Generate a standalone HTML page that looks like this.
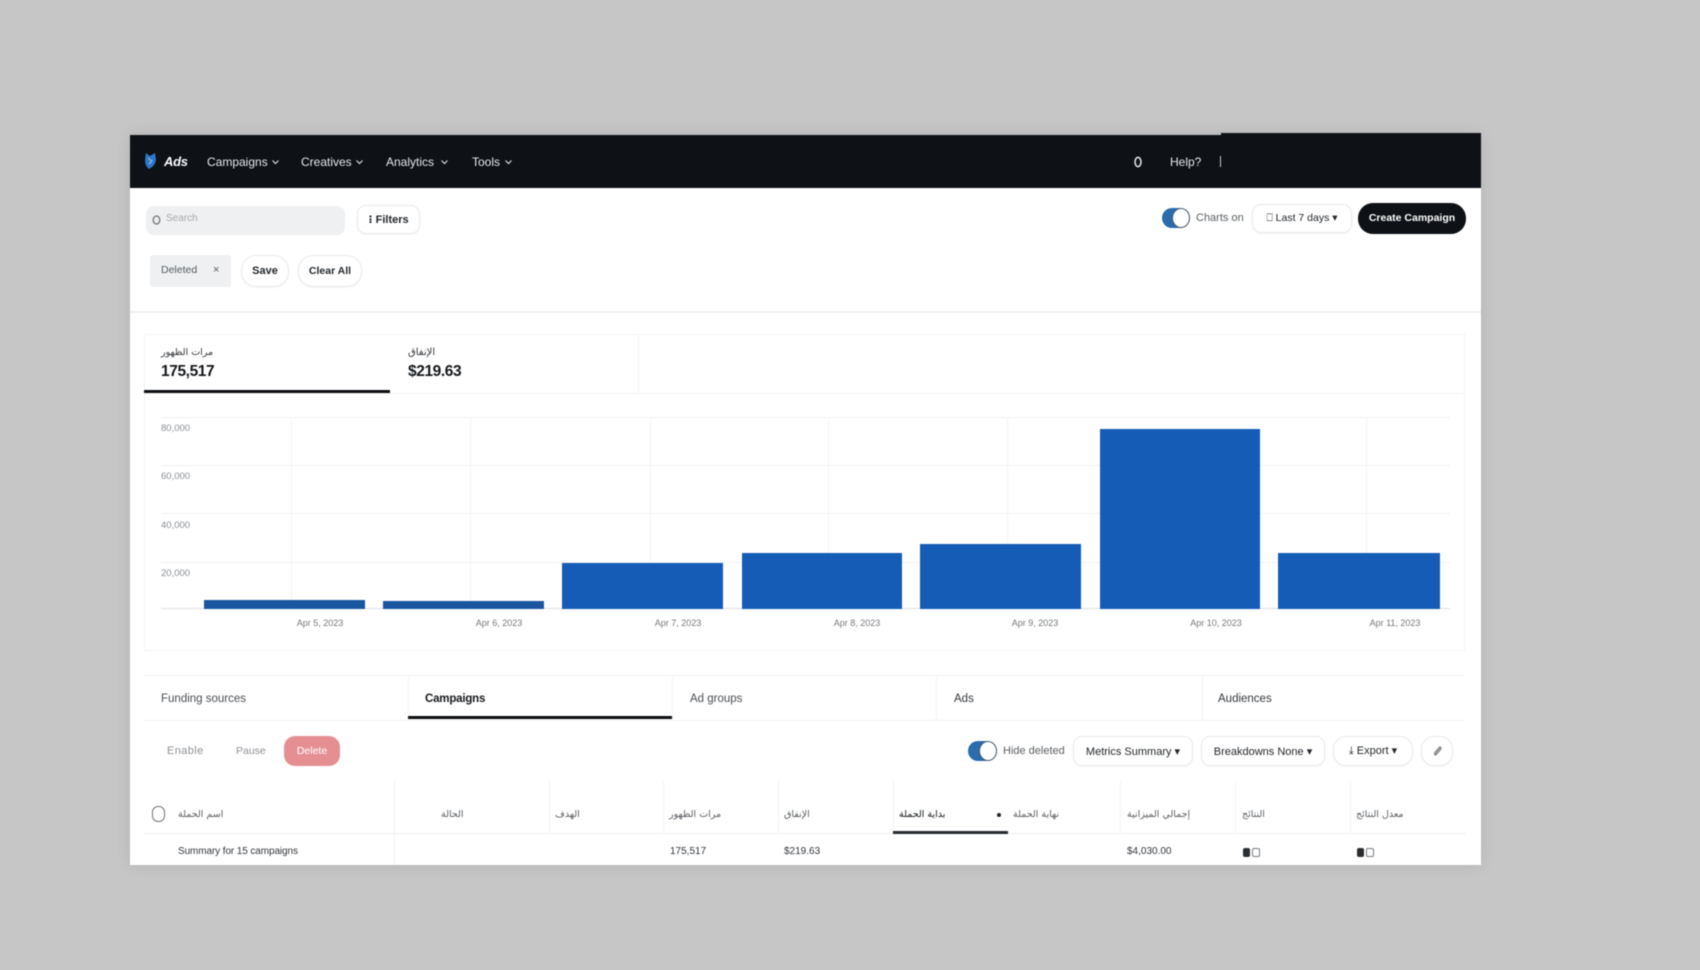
<!DOCTYPE html>
<html lang="en">
<head>
<meta charset="utf-8">
<title>Ads</title>
<style>
html,body{margin:0;padding:0;width:1700px;height:970px;overflow:hidden;background:#c6c6c6;font-family:"Liberation Sans","DejaVu Sans",sans-serif;color:#1a1d21}
.a{position:absolute;white-space:nowrap}
#page{position:absolute;left:130px;top:135px;width:1351px;height:730px;background:#fff;box-shadow:0 0 14px rgba(0,0,0,.1)}
#root{position:absolute;left:0;top:0;width:1700px;height:970px;filter:blur(.5px)}
.nav{color:#e6e8ea;font-size:12px;top:153px;line-height:18px}
.btn{border:1px solid #e8eaec;border-radius:9px;background:#fff;box-sizing:border-box;display:flex;align-items:center;justify-content:center;font-size:11px;color:#23272b;white-space:nowrap;box-shadow:0 1px 2px rgba(0,0,0,.04)}
.hl{height:1px;background:#f1f2f3}
.vl{width:1px;background:#f3f4f5}
.bar{background:#155cb6;top:auto}
.ylab{font-size:9.5px;color:#8a8d90;line-height:12px;left:161px}
.xlab{font-size:9px;color:#75787c;line-height:12px;top:617px;transform:translateX(-50%)}
.tab{font-size:11.5px;color:#4a4e52;line-height:16px;top:691px}
.th{font-family:"DejaVu Sans",sans-serif;font-size:9.5px;color:#5a5e62;line-height:14px;top:808px}
.td{font-size:10px;color:#33373b;line-height:14px;top:845px}
.tog{border-radius:11px;background:#2a6cae;box-sizing:border-box}
.tog i{position:absolute;right:0;top:0;bottom:0;border-radius:50%;background:#fff;border:1.5px solid #4a5a68;box-sizing:border-box}
</style>
</head>
<body>
<div id="root">
<div id="page"></div>

<!-- top nav -->
<div class="a" style="left:130px;top:135px;width:1351px;height:53px;background:#0e1116"></div>
<div class="a" style="left:1221px;top:133px;width:260px;height:3px;background:#0e1116"></div>
<svg class="a" style="left:143px;top:152px" width="15" height="18" viewBox="0 0 15 18"><path d="M3 1 L7 4 L12 1 L13 8 Q12 14 6 17 Q2 14 2 8 Z" fill="#2f77c8"/><path d="M5 6 L9 9 L6 12" stroke="#9cc7ef" stroke-width="1" fill="none"/></svg>
<div class="a" style="left:164px;top:152px;color:#fff;font-size:13px;font-weight:bold;font-style:italic;line-height:20px;letter-spacing:-.3px">Ads</div>
<div class="a nav" style="left:207px">Campaigns</div>
<svg class="a" style="left:271px;top:158px" width="9" height="8" viewBox="0 0 9 8"><path d="M1.5 2.5 L4.5 5.5 L7.5 2.5" stroke="#d8dadc" stroke-width="1.2" fill="none"/></svg>
<div class="a nav" style="left:301px">Creatives</div>
<svg class="a" style="left:355px;top:158px" width="9" height="8" viewBox="0 0 9 8"><path d="M1.5 2.5 L4.5 5.5 L7.5 2.5" stroke="#d8dadc" stroke-width="1.2" fill="none"/></svg>
<div class="a nav" style="left:386px">Analytics</div>
<svg class="a" style="left:440px;top:158px" width="9" height="8" viewBox="0 0 9 8"><path d="M1.5 2.5 L4.5 5.5 L7.5 2.5" stroke="#d8dadc" stroke-width="1.2" fill="none"/></svg>
<div class="a nav" style="left:472px">Tools</div>
<svg class="a" style="left:504px;top:158px" width="9" height="8" viewBox="0 0 9 8"><path d="M1.5 2.5 L4.5 5.5 L7.5 2.5" stroke="#d8dadc" stroke-width="1.2" fill="none"/></svg>
<svg class="a" style="left:1133px;top:155px" width="10" height="14" viewBox="0 0 10 14"><ellipse cx="5" cy="7" rx="3" ry="4.6" stroke="#e8eaec" stroke-width="1.5" fill="none"/></svg>
<div class="a nav" style="left:1170px">Help?</div>
<div class="a" style="left:1220px;top:156px;width:1px;height:11px;background:#c8cacc"></div>

<!-- toolbar -->
<div class="a" style="left:146px;top:206px;width:199px;height:29px;background:#eef0f1;border-radius:8px"></div>
<svg class="a" style="left:151px;top:213px" width="11" height="14" viewBox="0 0 11 14"><ellipse cx="5.5" cy="7" rx="3.3" ry="4" stroke="#72767a" stroke-width="1.3" fill="none"/></svg>
<div class="a" style="left:166px;top:212px;font-size:10px;color:#a6a9ac;line-height:14px">Search</div>
<div class="a btn" style="left:357px;top:205px;width:63px;height:29px;font-weight:bold">⁝ Filters</div>
<div class="a" style="left:150px;top:255px;width:81px;height:32px;background:#eef0f1;border-radius:3px"></div>
<div class="a" style="left:161px;top:263px;font-size:10.5px;color:#55595d;line-height:15px">Deleted</div>
<div class="a" style="left:213px;top:263px;font-size:11px;color:#55595d;line-height:15px">×</div>
<div class="a btn" style="left:241px;top:255px;width:48px;height:32px;border-radius:15px;font-weight:bold">Save</div>
<div class="a btn" style="left:298px;top:255px;width:64px;height:32px;border-radius:15px;font-size:10.5px;font-weight:bold">Clear All</div>

<div class="a tog" style="left:1162px;top:208px;width:28px;height:20px"><i style="width:18px"></i></div>
<div class="a" style="left:1196px;top:211px;font-size:11px;color:#5a5e62;line-height:15px">Charts on</div>
<div class="a btn" style="left:1252px;top:204px;width:100px;height:29px;font-size:10.5px">⎕ Last 7 days ▾</div>
<div class="a" style="left:1358px;top:203px;width:108px;height:31px;background:#0e1116;border-radius:15px;color:#fff;font-size:10.5px;font-weight:bold;text-align:center;line-height:30px">Create Campaign</div>

<div class="a" style="left:130px;top:311px;width:1351px;height:2px;background:#eceff0"></div>

<!-- metric tabs -->
<div class="a" style="left:144px;top:334px;width:1321px;height:317px;border:1px solid #f4f5f6;box-sizing:border-box"></div>
<div class="a hl" style="left:144px;top:393px;width:1321px"></div>
<div class="a vl" style="left:638px;top:334px;height:60px"></div>
<div class="a" style="left:144px;top:390px;width:246px;height:3px;background:#0c0e11"></div>
<div class="a" style="left:161px;top:346px;font-family:'DejaVu Sans',sans-serif;font-size:9.5px;color:#33373b;line-height:14px">مرات الظهور</div>
<div class="a" style="left:161px;top:362px;font-size:15.5px;font-weight:bold;color:#14171a;line-height:20px;letter-spacing:-.4px">175,517</div>
<div class="a" style="left:408px;top:346px;font-family:'DejaVu Sans',sans-serif;font-size:10px;color:#33373b;line-height:14px">الإنفاق</div>
<div class="a" style="left:408px;top:362px;font-size:15.5px;font-weight:bold;color:#14171a;line-height:20px;letter-spacing:-.4px">$219.63</div>

<!-- chart -->
<div class="a hl" style="left:161px;top:417px;width:1289px"></div>
<div class="a hl" style="left:161px;top:465px;width:1289px"></div>
<div class="a hl" style="left:161px;top:513px;width:1289px"></div>
<div class="a hl" style="left:161px;top:562px;width:1289px"></div>
<div class="a" style="left:161px;top:608px;width:1289px;height:1px;background:#dfe1e3"></div>
<div class="a vl" style="left:291px;top:417px;height:191px"></div>
<div class="a vl" style="left:470px;top:417px;height:191px"></div>
<div class="a vl" style="left:650px;top:417px;height:191px"></div>
<div class="a vl" style="left:828px;top:417px;height:191px"></div>
<div class="a vl" style="left:1007px;top:417px;height:191px"></div>
<div class="a vl" style="left:1366px;top:417px;height:191px"></div>

<div class="a bar" style="left:204px;top:600px;width:161px;height:9px;background:#1a569f"></div>
<div class="a bar" style="left:383px;top:601px;width:161px;height:8px;background:#1a569f"></div>
<div class="a bar" style="left:562px;top:563px;width:161px;height:46px"></div>
<div class="a bar" style="left:742px;top:553px;width:160px;height:56px"></div>
<div class="a bar" style="left:920px;top:544px;width:161px;height:65px"></div>
<div class="a bar" style="left:1100px;top:429px;width:160px;height:180px"></div>
<div class="a bar" style="left:1278px;top:553px;width:162px;height:56px"></div>

<div class="a ylab" style="top:423px">80,000</div>
<div class="a ylab" style="top:471px">60,000</div>
<div class="a ylab" style="top:520px">40,000</div>
<div class="a ylab" style="top:568px">20,000</div>
<div class="a xlab" style="left:320px">Apr 5, 2023</div>
<div class="a xlab" style="left:499px">Apr 6, 2023</div>
<div class="a xlab" style="left:678px">Apr 7, 2023</div>
<div class="a xlab" style="left:857px">Apr 8, 2023</div>
<div class="a xlab" style="left:1035px">Apr 9, 2023</div>
<div class="a xlab" style="left:1216px">Apr 10, 2023</div>
<div class="a xlab" style="left:1395px">Apr 11, 2023</div>

<!-- entity tabs -->
<div class="a hl" style="left:144px;top:675px;width:1321px;background:#f1f2f3"></div>
<div class="a hl" style="left:144px;top:720px;width:1321px;background:#f1f2f3"></div>
<div class="a vl" style="left:408px;top:675px;height:45px"></div>
<div class="a vl" style="left:672px;top:675px;height:45px"></div>
<div class="a vl" style="left:936px;top:675px;height:45px"></div>
<div class="a vl" style="left:1202px;top:675px;height:45px"></div>
<div class="a tab" style="left:161px">Funding sources</div>
<div class="a tab" style="left:425px;color:#15181b;font-weight:bold;letter-spacing:-.2px">Campaigns</div>
<div class="a tab" style="left:690px">Ad groups</div>
<div class="a tab" style="left:954px;color:#33373b">Ads</div>
<div class="a tab" style="left:1218px;color:#33373b">Audiences</div>
<div class="a" style="left:408px;top:716px;width:264px;height:3px;background:#0c0e11"></div>

<!-- actions row -->
<div class="a" style="left:167px;top:744px;font-size:11px;color:#8d9094;line-height:15px;letter-spacing:.4px">Enable</div>
<div class="a" style="left:236px;top:744px;font-size:10.5px;color:#8d9094;line-height:15px">Pause</div>
<div class="a" style="left:284px;top:736px;width:56px;height:30px;border-radius:11px;background:#e68f93;color:#fff;font-size:10.5px;text-align:center;line-height:30px">Delete</div>

<div class="a tog" style="left:968px;top:741px;width:29px;height:20px"><i style="width:18px"></i></div>
<div class="a" style="left:1003px;top:744px;font-size:11px;color:#5a5e62;line-height:15px">Hide deleted</div>
<div class="a btn" style="left:1073px;top:736px;width:120px;height:30px;font-size:11px">Metrics Summary ▾</div>
<div class="a btn" style="left:1201px;top:736px;width:124px;height:30px;font-size:11px">Breakdowns None ▾</div>
<div class="a btn" style="left:1333px;top:736px;width:80px;height:30px;border-radius:13px;font-size:11px">⤓ Export ▾</div>
<div class="a btn" style="left:1421px;top:736px;width:32px;height:30px;border-radius:13px"></div>
<svg class="a" style="left:1431px;top:744px" width="12" height="14" viewBox="0 0 12 14"><path d="M8.5 3 L3.5 9 Q3 11 5 11 L10 5 Q10.5 2.5 8.5 3 Z" fill="#9a9ea2" stroke="#8b8f93" stroke-width="1.2"/></svg>

<!-- table -->
<div class="a vl" style="left:394px;top:781px;height:84px"></div>
<div class="a vl" style="left:549px;top:781px;height:52px"></div>
<div class="a vl" style="left:663px;top:781px;height:52px"></div>
<div class="a vl" style="left:778px;top:781px;height:52px"></div>
<div class="a vl" style="left:893px;top:781px;height:52px"></div>
<div class="a vl" style="left:1120px;top:781px;height:52px"></div>
<div class="a vl" style="left:1235px;top:781px;height:52px"></div>
<div class="a vl" style="left:1350px;top:781px;height:52px"></div>
<div class="a hl" style="left:144px;top:833px;width:1321px;background:#eceef0"></div>
<div class="a" style="left:152px;top:806px;width:13px;height:16px;border:1.3px solid #70757a;border-radius:6px;box-sizing:border-box"></div>
<div class="a th" style="left:178px">اسم الحملة</div>
<div class="a th" style="left:441px">الحالة</div>
<div class="a th" style="left:555px">الهدف</div>
<div class="a th" style="left:669px">مرات الظهور</div>
<div class="a th" style="left:784px">الإنفاق</div>
<div class="a th" style="left:899px;color:#14171a">بداية الحملة</div>
<div class="a" style="left:997px;top:813px;width:4px;height:4px;border-radius:50%;background:#23272b"></div>
<div class="a th" style="left:1013px">نهاية الحملة</div>
<div class="a th" style="left:1127px">إجمالي الميزانية</div>
<div class="a th" style="left:1242px">النتائج</div>
<div class="a th" style="left:1356px">معدل النتائج</div>
<div class="a" style="left:893px;top:831px;width:115px;height:3px;background:#2a2d30"></div>

<div class="a td" style="left:178px;letter-spacing:-.1px">Summary for 15 campaigns</div>
<div class="a td" style="left:670px">175,517</div>
<div class="a td" style="left:784px">$219.63</div>
<div class="a td" style="left:1127px">$4,030.00</div>
<div class="a" style="left:1243px;top:848px;width:7px;height:9px;background:#2a2d30;border-radius:2px"></div>
<div class="a" style="left:1252px;top:848px;width:8px;height:9px;border:1px solid #777b7f;box-sizing:border-box;border-radius:2px"></div>
<div class="a" style="left:1357px;top:848px;width:7px;height:9px;background:#2a2d30;border-radius:2px"></div>
<div class="a" style="left:1366px;top:848px;width:8px;height:9px;border:1px solid #777b7f;box-sizing:border-box;border-radius:2px"></div>
</div>
</body>
</html>
